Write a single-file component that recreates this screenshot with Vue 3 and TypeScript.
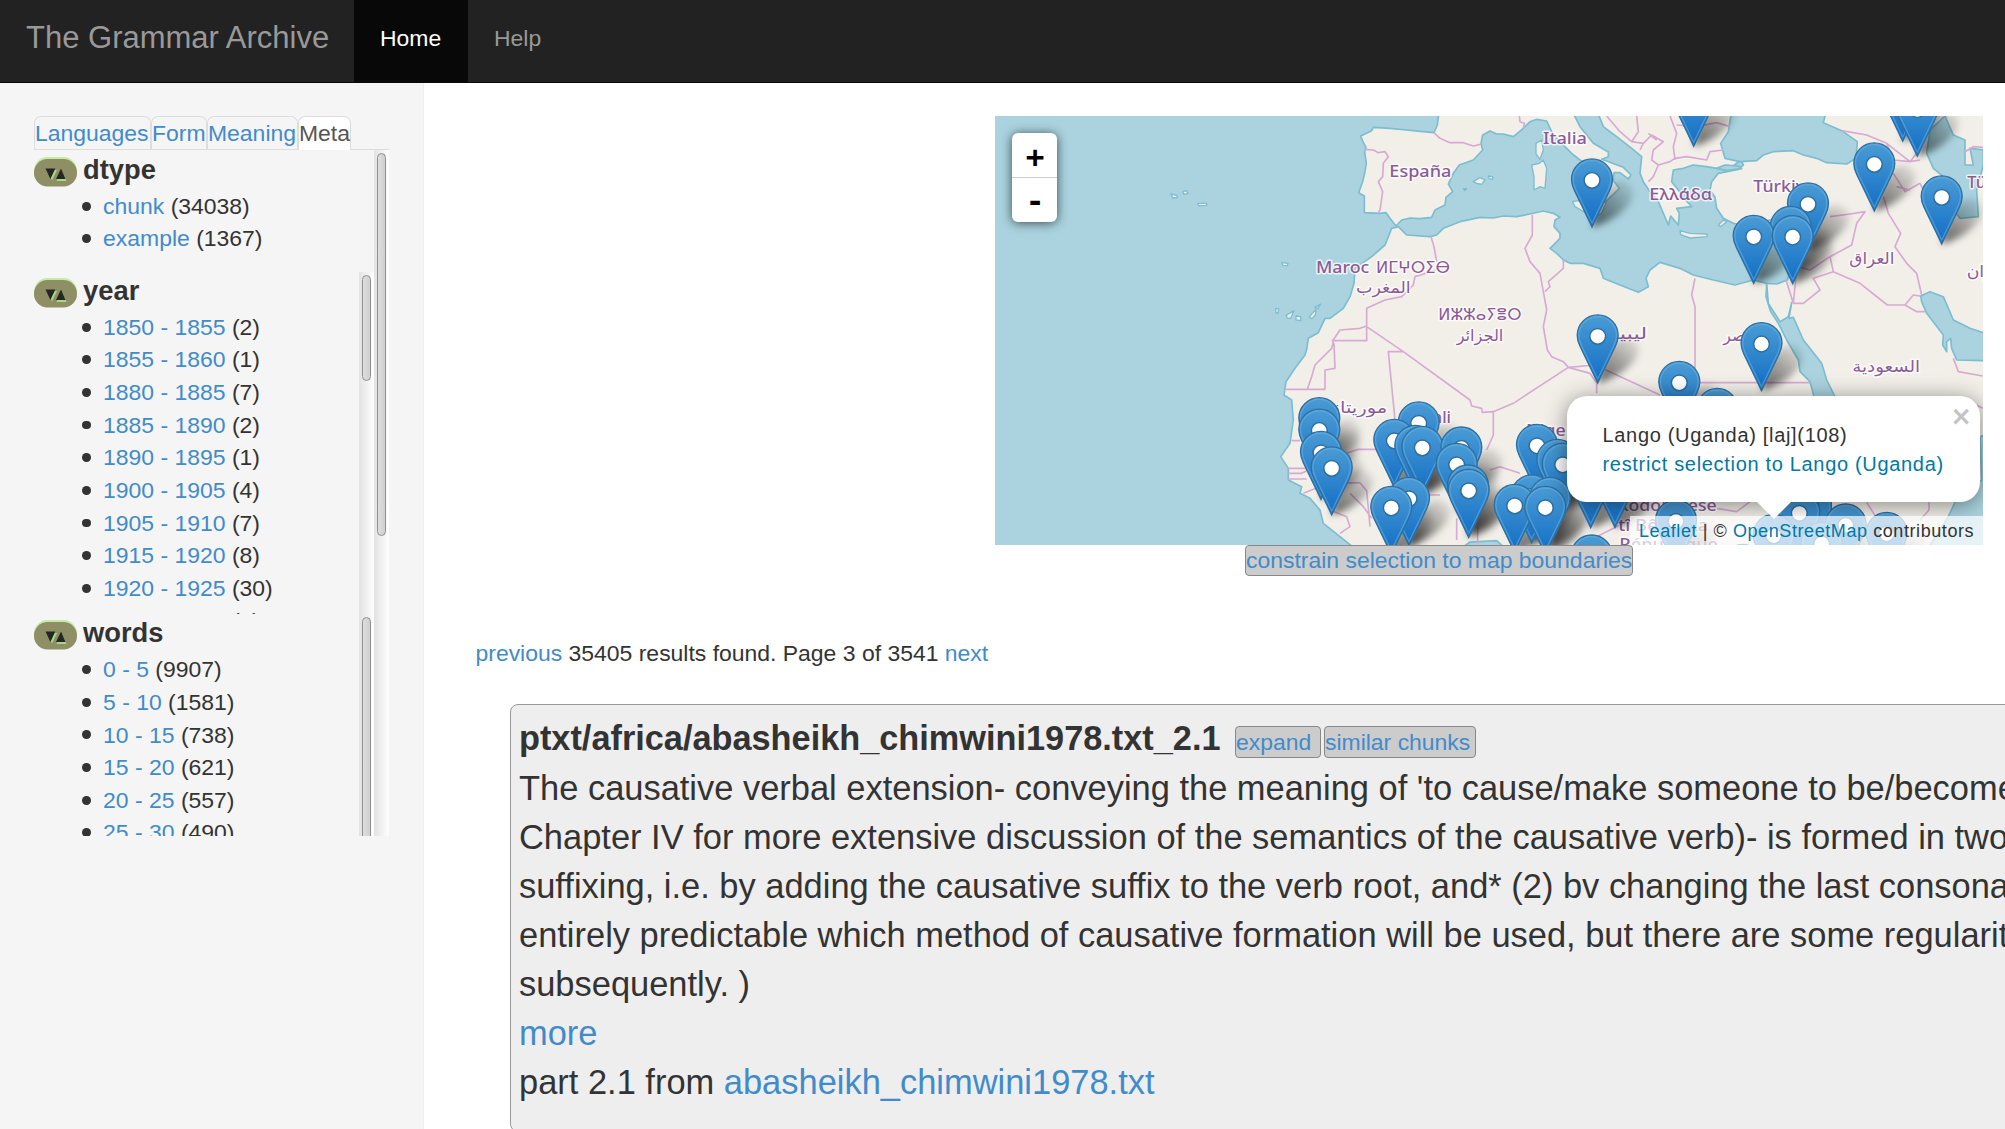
<script setup lang="ts">
interface Facet { name: string; items: [string, number][]; height: number; thumb?: string }

const tabs: string[] = ['Languages', 'Form', 'Meaning', 'Meta']

const facets: Facet[] = [
  { name: 'dtype', height: 121, items: [['chunk', 34038], ['example', 1367]] },
  {
    name: 'year', height: 342.4, thumb: 'short',
    items: [
      ['1850 - 1855', 2], ['1855 - 1860', 1], ['1880 - 1885', 7], ['1885 - 1890', 2],
      ['1890 - 1895', 1], ['1900 - 1905', 4], ['1905 - 1910', 7], ['1915 - 1920', 8],
      ['1920 - 1925', 30], ['1925 - 1930', 4],
    ],
  },
  {
    name: 'words', height: 342.4, thumb: 'long',
    items: [['0 - 5', 9907], ['5 - 10', 1581], ['10 - 15', 738], ['15 - 20', 621], ['20 - 25', 557], ['25 - 30', 490]],
  },
]

const lines: string[] = [
  "The causative verbal extension- conveying the meaning of 'to cause/make someone to be/become",
  'Chapter IV for more extensive discussion of the semantics of the causative verb)- is formed in two',
  'suffixing, i.e. by adding the causative suffix to the verb root, and* (2) bv changing the last consonant',
  'entirely predictable which method of causative formation will be used, but there are some regularities',
  'subsequently. )',
]

// Tip position of every pin, drawn north to south
const pins: [number, number][] = ([
  [1693.7, 145.7], [1902.7, 140.7], [1917.3, 155.7], [1874.3, 210.5], [1592, 226.5], [1941.7, 243.5],
  [1808, 250.5], [1790.7, 274], [1753.7, 283], [1792.7, 283.2], [1597.7, 382.5], [1761.5, 390.2],
  [1679.3, 429], [1717.3, 456], [1319.3, 465.3], [1319.3, 476.7], [1321, 499], [1331.7, 514.5],
  [1418.7, 469.5], [1394.3, 487], [1415.3, 493], [1422.3, 494], [1461.3, 494.6], [1456.7, 511],
  [1468, 532.6], [1468.7, 537], [1409, 545], [1391.3, 554], [1537, 492], [1557.3, 507], [1562.7, 511],
  [1531.7, 542.5], [1550, 545], [1514.7, 552], [1545.3, 554], [1590.7, 527.3], [1615, 527],
  [1591.7, 602.6], [1676, 567.5], [1811, 553], [1799.3, 559.5], [1845.7, 571.6], [1886.7, 580],
  [1773.7, 582], [1821.7, 590], [1742.7, 612],
] as [number, number][]).sort((a, b) => a[1] - b[1])

interface Label { t: string; x: number; y: number; w?: number; a?: string; ar?: boolean }
const labels: Label[] = [
  { t: 'España', x: 178, y: 201, w: 186 },
  { t: 'Italia', x: 639, y: 101, w: 132 },
  { t: 'Ελλάδα', x: 958, y: 271, w: 189 },
  { t: 'Türkiye', x: 1270, y: 246, w: 186 },
  { t: 'Türkmenistan', x: 1912, y: 233 },
  { t: 'Maroc', x: -42, y: 488, w: 160 },
  { t: 'ⵍⵎⵖⵔⵉⴱ', x: 138, y: 488, w: 222, ar: true },
  { t: 'المغرب', x: 78, y: 548, w: 164, ar: true },
  { t: 'ⵍⵣⵣⴰⵢⴻⵔ', x: 325, y: 630, w: 250, ar: true },
  { t: 'الجزائر', x: 380, y: 692, w: 140, ar: true },
  { t: 'ليبيا', x: 848, y: 688, w: 104, ar: true },
  { t: 'مصر', x: 1180, y: 692, w: 92, ar: true },
  { t: 'العراق', x: 1558, y: 463, w: 135, ar: true },
  { t: 'السعودية', x: 1567, y: 785, w: 203, ar: true },
  { t: 'ایران', x: 1910, y: 500, w: 110, ar: true },
  { t: 'موريتانيا', x: -22, y: 910, w: 194, ar: true },
  { t: 'Mali', x: 363, y: 940, a: 'end' },
  { t: 'Niger', x: 588, y: 977, w: 142 },
  { t: 'Ködörösêse', x: 862, y: 1202, w: 298 },
  { t: 'tî Bêafrîka', x: 865, y: 1264, w: 270 },
  { t: 'République', x: 868, y: 1320, w: 296 },
]

const europe = 'M328 0 322 45 312 68 270 64 230 60 180 55 130 52 125 62 92 78 100 98 108 112 104 125 109 160 104 190 98 215 86 248 103 258 103 308 150 310 168 308 180 325 198 348 215 330 240 324 270 326 305 322 315 300 345 285 348 262 368 245 355 222 370 190 388 165 430 150 458 120 453 100 458 75 480 63 500 72 520 72 550 80 580 55 600 35 620 28 650 33 665 65 690 95 725 130 750 150 780 165 815 185 835 215 830 245 820 280 845 258 868 235 850 212 852 188 870 188 895 207 903 195 880 172 815 148 835 140 835 126 790 100 750 50 725 0Z'
const mainland = 'M800 0 820 50 860 80 905 115 935 140 930 190 940 215 960 245 985 275 1000 310 1015 345 1022 318 1045 345 1048 310 1040 295 1085 290 1060 262 1045 240 1025 215 1030 180 1060 175 1090 165 1130 170 1160 175 1210 168 1232 150 1240 165 1225 178 1165 190 1145 215 1140 240 1155 262 1160 295 1180 325 1210 340 1240 345 1320 330 1390 320 1405 345 1395 400 1385 470 1372 510 1340 522 1310 520 1270 510 1215 525 1150 510 1090 495 1050 475 990 457 960 480 948 505 955 530 925 547 870 525 820 505 810 475 760 460 720 460 700 450 680 430 660 415 690 385 690 370 672 350 675 330 690 322 670 310 640 303 600 312 560 320 520 318 490 324 450 322 390 335 340 355 320 375 300 380 230 375 205 350 185 355 165 405 125 440 75 475 72 520 60 560 40 595 0 625 -15 625 -35 668 -65 685 -70 718 -75 735 -105 775 -132 815 -138 855 -115 870 -110 930 -120 1000 -148 1040 -125 1075 -125 1110 -85 1130 -90 1150 -60 1165 -30 1200 -20 1240 30 1280 80 1320 2000 1320 2000 0Z'
const waters: string[] = [
  'M1205 0 1195 65 1172 100 1185 145 1230 155 1280 152 1300 135 1330 125 1390 122 1420 135 1460 145 1490 158 1550 162 1578 145 1582 95 1535 62 1480 38 1485 18 1480 0Z',
  'M1790 130 1810 175 1840 200 1870 300 1890 325 1945 320 1940 240 1960 165 1960 120 1920 115 1930 165 1905 165 1905 90 1870 75 1845 18 1800 60Z',
  'M1775 575 1772 558 1800 545 1840 560 1870 630 1920 655 1965 670 1965 752 1880 750 1865 715 1862 685 1850 695 1850 725 1838 705 1840 675 1790 610Z',
  'M1310 520 1315 580 1350 635 1375 620 1385 578 1377 625 1390 622 1420 690 1475 760 1490 810 1520 870 1455 870 1440 815 1410 785 1405 750 1370 690 1345 640 1322 605 1308 560Z',
  'M1965 975 1950 980 1955 1110 1875 1177 1855 1220 1830 1260 1790 1320 1965 1320Z',
  'M400 1310 420 1296 500 1292 520 1310Z',
  'M1160 175 1185 165 1225 168 1235 176 1190 182Z',
]
const islands = 'M605 165 628 160 640 150 650 175 645 235 630 230 612 240 612 200Z M618 100 635 90 640 120 630 148 618 132Z M430 215 450 203 465 210 455 223 440 220Z M475 198 488 200 488 208 478 206Z M400 236 410 236 404 242Z M728 275 745 272 790 285 830 275 815 310 790 322 735 290Z M1050 362 1080 370 1130 372 1132 380 1080 384 1052 374Z M1165 345 1180 330 1190 335 1172 350Z M-477 252 -460 256 -457 262 -472 264Z M-442 245 -430 242 -426 250 -438 253Z M-397 280 -370 280 -370 286 -394 287Z M-145 458 -126 460 -128 467 -142 466Z M-163 595 -154 596 -156 610 -163 608Z M-132 616 -108 602 -118 625 -128 624Z M-102 618 -88 620 -88 632 -102 630Z M-62 620 -42 598 -44 615 -54 626Z M-45 592 -28 582 -36 596Z'
const borders = 'M104 118 130 120 145 128 165 125 175 140 160 160 158 200 145 215 158 245 150 300 145 308M312 68 330 85 360 98 400 98 430 108 452 103M568 18 570 35 583 40 580 55M303 380 312 410 320 455M320 480 255 500 250 525 215 560 165 570 110 595V692H8L30 660 90 655 110 648M110 650 220 725 420 870 425 888 455 895 457 907 490 905 550 880 715 772M110 692H5M10 694 5 715 -45 765 -55 800 -68 838M12 700 15 775 -15 780V838H-132M220 725H175L195 930 190 1018H85L50 1030M607 315 607 375 585 415 600 455 630 490 640 545 650 600 640 650 652 720 665 740 700 755 715 772 780 790 800 820V850M700 450V475L655 515 660 530 645 545M715 772 795 765 990 855M1095 505 1085 555 1095 590V818H1440M490 905V975L470 1020M-115 992H-90M-125 1075H-70M-125 1090H-85L-70 1082M-125 1107H-70M20 1120 90 1118 110 1142 120 1250M60 1150 100 1190 125 1225M-80 1150-30 1130M0 1200 50 1220 60 1250 30 1270M480 1080 510 1070 570 1090M380 1225V1290M443 1250V1300M270 1155H330M1500 320 1560 312 1605 305 1580 340 1565 405 1500 440 1440 480 1400 470M1500 440 1510 485 1590 520 1672 585H1725L1750 555 1770 558M1725 585 1760 605H1785M1510 485 1450 505 1470 540 1420 580 1390 580 1400 480M1390 580 1368 510M1660 260 1675 310 1712 370 1695 410 1730 460 1760 490 1775 555M1535 62 1610 75 1670 100 1740 155 1760 130M1670 100 1690 150 1740 155 1770 150M1690 190 1725 245 1770 220 1780 240M1700 230 1740 240M830 18 870 65 905 95 925 65 920 18M905 95 940 100 965 75 1000 95 970 120 965 150 985 165 1020 155 1035 145 1070 140 1130 150 1140 125 1180 120M985 165 970 200 955 215M1020 18 1040 70 1030 110 1035 150M1040 45 1100 50 1160 38 1200 50M940 100 930 120M955 70 980 90M1900 128 1930 110 1960 112M1610 1177 1650 1240M1797 1177V1200L1770 1230M1160 1195 1220 1205 1260 1175M800 1280 880 1240M1940 885 1958 895M1870 745 1885 785 1958 798'
</script>

<template>
  <div class="page">
    <nav class="navbar">
      <a class="brand">The Grammar Archive</a>
      <a class="nav active">Home</a>
      <a class="nav">Help</a>
    </nav>

    <div class="body">
      <aside class="sidebar">
        <div class="tabs">
          <a v-for="t in tabs" :key="t" :class="['tab', t.toLowerCase(), { current: t === 'Meta' }]"><span>{{ t }}</span></a>
        </div>
        <div class="panel">
          <div class="facets">
            <section v-for="f in facets" :key="f.name" class="facet" :style="{ height: f.height + 'px' }">
              <div class="facet-body">
                <h3>
                  <svg class="pill" width="43" height="30" viewBox="0 0 43 30">
                    <rect width="43" height="27" rx="13.5" fill="#c5eba6" />
                    <rect y="2" width="43" height="27.5" rx="13.5" fill="#8f8f66" />
                    <path d="M13 13H23L18 23.500ZM22.500 24 27.500 13.500 32.500 24Z" fill="#a2dc80" />
                    <path d="M11.500 11.500H21.300L16.400 22ZM22 22 27 11.500 31.500 22Z" fill="#262626" />
                  </svg>
                  <span>{{ f.name }}</span>
                </h3>
                <ul>
                  <li v-for="[label, n] in f.items" :key="label"><a>{{ label }}</a>&nbsp;({{ n }})</li>
                </ul>
              </div>
              <div v-if="f.thumb" class="track"><div :class="['thumb', f.thumb]"></div></div>
            </section>
          </div>
          <div class="track"><div class="thumb outer"></div></div>
        </div>
      </aside>

      <main>
        <div class="map">
          <svg class="tiles" width="988" height="429" viewBox="-1005 18 2964 1287">
            <defs>
              <linearGradient id="pinfill" x1="0" y1="0" x2="0" y2="1">
                <stop offset="0" stop-color="#4b9cd5" /><stop offset="1" stop-color="#116dc5" />
              </linearGradient>
              <linearGradient id="shade" x1="0" y1="1" x2=".8" y2="0">
                <stop offset="0" stop-color="#000" stop-opacity=".62" /><stop offset="1" stop-color="#000" stop-opacity=".08" />
              </linearGradient>
              <filter id="soft" x="-40%" y="-40%" width="180%" height="180%"><feGaussianBlur stdDeviation="3.8" /></filter>
              <path id="shadow" d="M0 0C3-20 12-42 27-46 41-47 45-34 37-23 28-11 13-3 0 0Z" fill="url(#shade)" filter="url(#soft)" />
              <g id="pin">
                <path d="M0 0-17.600-36.500C-19.500-40.500-20.500-43.500-20.500-47.600A20.500 20.500 0 0 1 20.500-47.600C20.500-43.500 19.500-40.500 17.600-36.500Z" fill="url(#pinfill)" stroke="#2e6f9f" stroke-width="1.300" />
                <path d="M0-4-16-37C-17.900-41-18.800-43.800-18.800-47.600A18.800 18.800 0 0 1 18.800-47.600C18.800-43.800 17.900-41 16-37Z" fill="none" stroke="#6db3e2" stroke-opacity=".55" stroke-width="1.300" />
                <circle cy="-46.700" r="7.900" fill="#fff" stroke="#2e6f9f" stroke-width="1.500" />
              </g>
            </defs>
            <rect x="-1005" y="18" width="2964" height="1287" fill="#aad3df" />
            <g fill="#f2efe9" stroke="#7cbdcf" stroke-width="5" stroke-linejoin="round">
              <path :d="europe" /><path :d="mainland" /><path :d="islands" stroke-width="4" />
              <path v-for="(w, i) in waters" :key="i" :d="w" fill="#aad3df" />
            </g>
            <path :d="borders" fill="none" stroke="#d8aad3" stroke-width="5" stroke-linejoin="round" />
            <text
              v-for="l in labels" :key="l.t" :x="l.x" :y="l.y" :class="['label', { script: l.ar }]"
              :text-anchor="l.a" :textLength="l.w" lengthAdjust="spacingAndGlyphs"
            >{{ l.t }}</text>
            <g transform="translate(-3990 -328.500) scale(3)">
              <use v-for="([x, y], i) in pins" :key="'s' + i" href="#shadow" :x="x" :y="y" />
              <use v-for="([x, y], i) in pins" :key="i" href="#pin" :x="x" :y="y" />
            </g>
          </svg>
          <div class="zoom"><a>+</a><a>-</a></div>
          <div class="popup">
            <div>Lango (Uganda) [laj](108)</div>
            <a>restrict selection to Lango (Uganda)</a>
            <span class="close">×</span>
            <i class="tip"></i>
          </div>
          <div class="credit"><a>Leaflet</a> | © <a>OpenStreetMap</a> contributors</div>
        </div>
        <a class="btn constrain">constrain selection to map boundaries</a>

        <p class="pager"><a>previous</a> 35405 results found. Page 3 of 3541 <a>next</a></p>

        <article class="result">
          <header>
            <strong>ptxt/africa/abasheikh_chimwini1978.txt_2.1</strong>
            <a class="btn expand">expand</a>
            <a class="btn similar">similar chunks</a>
          </header>
          <div v-for="l in lines" :key="l">{{ l }}</div>
          <div><a>more</a></div>
          <div>part 2.1 from <a>abasheikh_chimwini1978.txt</a></div>
        </article>
      </main>
    </div>
  </div>
</template>

<style>
body { margin: 0; background: #fff; overflow: hidden; }
</style>

<style scoped>
* { box-sizing: border-box; }
.page { width: 2005px; height: 1129px; overflow: hidden; display: flex; flex-direction: column; font: 22.95px/32.64px "Liberation Sans", Arial, sans-serif; color: #333; white-space: nowrap; }
a { color: #428bca; }
.navbar { height: 83px; flex: none; display: flex; background: #222; border-bottom: 1px solid #080808; line-height: 77px; }
.navbar a { color: #999; }
.brand { width: 354px; padding-left: 26px; font-size: 31px; line-height: 76px; }
.nav { padding: 0 26px; height: 82px; }
.nav.active { width: 114px; background: #080808; color: #fff; }
.body { flex: 1; min-height: 0; display: flex; }
.sidebar { width: 424px; flex: none; padding: 33px 34px; background: #f5f5f5; border-right: 1px solid #eee; }
.tabs { display: flex; width: 355px; height: 34px; border-bottom: 1px solid #ddd; }
.tab { height: 34px; border: 1px solid #ddd; border-bottom: 0; border-radius: 7px 7px 0 0; display: flex; justify-content: flex-start; }
.languages { width: 117px; }
.form { width: 56px; }
.meaning { width: 91px; }
.meta { width: 53px; }
.tab.current { background: #fff; color: #555; }
.panel { display: flex; width: 355px; height: 686px; overflow: hidden; }
.facets { width: 340px; height: 686px; padding-top: .8px; overflow: hidden; }
.facet { display: flex; overflow: hidden; }
.facet-body { flex: 1; }
h3 { margin: 0; height: 39px; display: flex; font-size: 27.3px; line-height: 37.500px; }
.pill { margin: 6px 6.400px 0 -.3px; }
ul { margin: 0; padding: 0; list-style: none; }
li { display: flex; align-items: center; height: 32.66px; }
li::before { content: ""; width: 8.8px; height: 8.8px; border-radius: 50%; background: #333; margin: 0 12px 0 48.300px; }
.track { width: 15px; padding: 3px; background: linear-gradient(90deg, #e2e2e2, #fff); }
.thumb { width: 9px; border: 1px solid #8f8f8f; border-radius: 5px; background: linear-gradient(90deg, #dedede, #cfcfcf); }
.thumb.short { height: 106px; }
.thumb.long { height: 330px; }
.thumb.outer { height: 383px; }
main { flex: 1; min-width: 0; padding-top: 33px; display: flex; flex-direction: column; align-items: flex-start; overflow: hidden; }
.map { position: relative; width: 988px; height: 429px; flex: none; margin-left: 571px; overflow: hidden; }
.tiles { display: block; }
.label { font: 500 49px "Noto Sans", sans-serif; fill: #8d5a99; stroke: #fff; stroke-opacity: .75; stroke-width: 9px; stroke-linejoin: round; paint-order: stroke; }
.label.script { font-family: "DejaVu Sans", sans-serif; font-size: 48px; }
.zoom { position: absolute; left: 17px; top: 17px; width: 45px; height: 89px; border-radius: 6px; background: #fff; box-shadow: 0 1px 11px rgba(0, 0, 0, .65); }
.zoom a { display: block; height: 44px; padding-left: 1px; text-align: center; font: bold 31px/46px "DejaVu Sans Mono", monospace; color: #000; }
.zoom a:first-child { height: 45px; border-bottom: 1px solid #ccc; }
.popup { position: absolute; left: 572px; top: 280px; width: 413px; height: 106px; padding: 25px 35.500px; border-radius: 20px; background: #fff; box-shadow: 0 3px 22px rgba(0, 0, 0, .45); font-size: 20px; line-height: 29px; letter-spacing: .68px; }
.popup a, .credit a { color: #0078a8; }
.close { position: absolute; right: 8px; top: 5px; font: bold 26px/30px "DejaVu Sans", sans-serif; letter-spacing: 0; color: #c3c3c3; }
.tip { position: absolute; left: 189px; top: 105px; width: 36px; height: 18px; background: #fff; clip-path: polygon(0 0, 100% 0, 50% 100%); }
.credit { position: absolute; right: 0; bottom: 0; width: 353px; height: 29px; padding-left: 9px; background: rgba(255, 255, 255, .7); font-size: 18px; line-height: 30px; letter-spacing: .58px; }
.btn { display: block; flex: none; height: 31px; border: 1px solid #888; border-radius: 4px; background: #ccc; font-size: 22.95px; line-height: 29px; }
.constrain { width: 388px; margin-left: 821px; }
.pager { margin: 61px 0 34.3px 51.500px; }
.result { width: 1620px; flex: none; margin-left: 86px; padding: 9px 8px 24px; border: 1px solid #999; border-radius: 8px; background: #eee; font-size: 34.45px; line-height: 49px; }
.result header { display: flex; height: 49.600px; }
.result strong { width: 716px; font-size: 34.3px; }
.result .btn { height: 32px; margin-top: 12px; line-height: 30px; }
.result .expand { width: 86px; margin-right: 3px; }
.result .similar { width: 152px; }
</style>
